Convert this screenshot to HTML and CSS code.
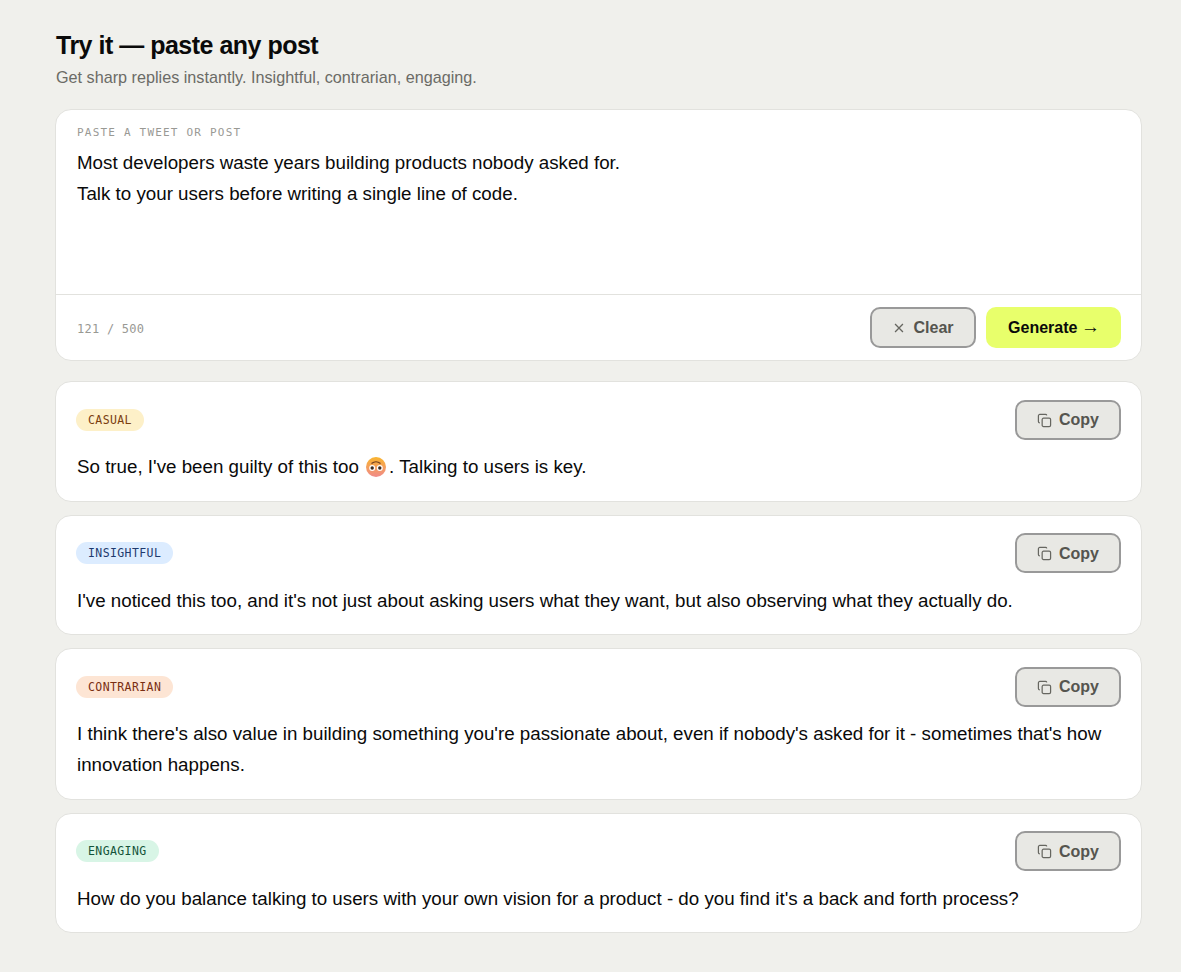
FILE: index.html
```
<!DOCTYPE html>
<html lang="en">
<head>
<meta charset="utf-8">
<title>Try it</title>
<link rel="stylesheet" href="styles.css">
</head>
<body>
<main class="page">
  <header class="intro">
    <h1>Try it — paste any post</h1>
    <p>Get sharp replies instantly. Insightful, contrarian, engaging.</p>
  </header>
  <section class="card composer">
    <div class="composer-body">
      <div class="label">PASTE A TWEET OR POST</div>
      <div class="post">Most developers waste years building products nobody asked for.<br>Talk to your users before writing a single line of code.</div>
    </div>
    <div class="composer-foot">
      <span class="count">121 / 500</span>
      <div class="actions">
        <button class="btn btn-ghost btn-clear"><svg class="ico ico-x" viewBox="0 0 16 16"><path d="M3.5 3.5l9 9M12.5 3.5l-9 9"/></svg>Clear</button>
        <button class="btn btn-go">Generate <span class="arrow">→</span></button>
      </div>
    </div>
  </section>
  <div class="replies">
    <article class="card reply">
      <div class="reply-top"><span class="tag tag-casual">CASUAL</span>
        <button class="btn btn-ghost btn-copy"><svg class="ico" viewBox="0 0 16 16"><rect x="5.5" y="5.5" width="9" height="9" rx="1.5"/><path d="M10.5 2.5A1.5 1.5 0 0 0 9 1.500H3A1.5 1.5 0 0 0 1.500 3v6A1.5 1.5 0 0 0 3 10.500"/></svg>Copy</button></div>
      <p>So true, I've been guilty of this too <svg class="emoji" viewBox="0 0 20 20"><defs><linearGradient id="face" x1="0" y1="0" x2="0" y2="1"><stop offset="0" stop-color="#f9b52e"/><stop offset="1" stop-color="#f08a8a"/></linearGradient></defs><circle cx="10" cy="10" r="10" fill="url(#face)"/><path d="M5.500 6.500Q10 3 14.500 6.500" fill="none" stroke="#6b3a1e" stroke-width="1.200"/><circle cx="6.200" cy="11" r="3" fill="#fff"/><circle cx="13.800" cy="11" r="3" fill="#fff"/><circle cx="6.200" cy="11" r="1.700" fill="#3a2a20"/><circle cx="13.800" cy="11" r="1.700" fill="#3a2a20"/></svg>. Talking to users is key.</p>
    </article>
    <article class="card reply">
      <div class="reply-top"><span class="tag tag-insightful">INSIGHTFUL</span>
        <button class="btn btn-ghost btn-copy"><svg class="ico" viewBox="0 0 16 16"><rect x="5.5" y="5.5" width="9" height="9" rx="1.5"/><path d="M10.5 2.5A1.5 1.5 0 0 0 9 1.500H3A1.5 1.5 0 0 0 1.500 3v6A1.5 1.5 0 0 0 3 10.500"/></svg>Copy</button></div>
      <p>I've noticed this too, and it's not just about asking users what they want, but also observing what they actually do.</p>
    </article>
    <article class="card reply">
      <div class="reply-top"><span class="tag tag-contrarian">CONTRARIAN</span>
        <button class="btn btn-ghost btn-copy"><svg class="ico" viewBox="0 0 16 16"><rect x="5.5" y="5.5" width="9" height="9" rx="1.5"/><path d="M10.5 2.5A1.5 1.5 0 0 0 9 1.500H3A1.5 1.5 0 0 0 1.500 3v6A1.5 1.5 0 0 0 3 10.500"/></svg>Copy</button></div>
      <p>I think there's also value in building something you're passionate about, even if nobody's asked for it - sometimes that's how innovation happens.</p>
    </article>
    <article class="card reply">
      <div class="reply-top"><span class="tag tag-engaging">ENGAGING</span>
        <button class="btn btn-ghost btn-copy"><svg class="ico" viewBox="0 0 16 16"><rect x="5.5" y="5.5" width="9" height="9" rx="1.5"/><path d="M10.5 2.5A1.5 1.5 0 0 0 9 1.500H3A1.5 1.5 0 0 0 1.500 3v6A1.5 1.5 0 0 0 3 10.500"/></svg>Copy</button></div>
      <p>How do you balance talking to users with your own vision for a product - do you find it's a back and forth process?</p>
    </article>
  </div>
</main>
</body>
</html>
```
FILE: styles.css
```
* { box-sizing: border-box; }
html, body { margin: 0; padding: 0; }
body {
  background: #f0f0ec;
  color: #0a0a0a;
  font-family: "Liberation Sans", Arial, sans-serif;
}
.page { width: 1087px; margin-left: 55px; padding-top: 29px; padding-bottom: 38px; }
.intro { padding-left: 1px; margin-bottom: 22px; }
.intro h1 { margin: 0; font-size: 25px; line-height: 32px; font-weight: 700; letter-spacing: -0.5px; }
.intro p { margin: 6px 0 0; font-size: 16.2px; line-height: 20px; color: #6b6b66; }
.card { background: #fff; border: 1px solid #e2e2de; border-radius: 16px; }
.composer { margin-bottom: 20px; }
.composer-body { height: 185px; padding: 16px 20px 0 21px; border-bottom: 1px solid #e2e2de; }
.label { font-family: "DejaVu Sans Mono", monospace; font-size: 11px; line-height: 14px; letter-spacing: 1.2px; color: #999994; }
.post { margin-top: 7px; font-size: 18.75px; line-height: 31px; }
.composer-foot { display: flex; justify-content: space-between; align-items: center; padding: 12px 20px 12px 21px; }
.count { margin-top: 2px; font-family: "DejaVu Sans Mono", monospace; font-size: 12px; letter-spacing: 0.25px; color: #999994; }
.actions { display: flex; gap: 10px; }
.btn { display: inline-flex; align-items: center; justify-content: center; gap: 7px; font-family: inherit; font-size: 16px; font-weight: 700; border-radius: 10px; height: 41px; padding: 0; cursor: pointer; }
.btn-ghost { background: #e8e8e4; border: 2px solid #999; color: #55554f; }
.btn-clear { width: 106px; }
.btn-copy { width: 106px; height: 40.1px; padding-top: 1px; }
.btn-go { width: 135px; gap: 0; padding-left: 1px; border: 0; background: #e8ff6b; color: #0a0a0a; white-space: pre; }
.arrow { margin-left: -1px; font-size: 19px; line-height: 1; position: relative; top: -1.5px; }
.ico { width: 15px; height: 15px; fill: none; stroke: #666660; stroke-width: 1.3; }
.ico-x { width: 14px; height: 14px; stroke-width: 1.5; }
.replies { display: flex; flex-direction: column; gap: 13px; }
.reply { padding: 17.6px 20px 18px; }
.reply-top { display: flex; justify-content: space-between; align-items: center; }
.reply p { margin: 12.4px 0 0; padding-left: 1px; font-size: 18.75px; line-height: 30.6px; }
.emoji { width: 20px; height: 20px; margin: 0 3px 0 2px; vertical-align: -4px; }
.tag { font-family: "DejaVu Sans Mono", monospace; font-size: 11.5px; line-height: 14px; padding: 4px 12px; border-radius: 11px; letter-spacing: 0.4px; }
.tag-casual { background: #fdf0c8; color: #7a3e10; }
.tag-insightful { background: #dcecff; color: #1e3a6e; }
.tag-contrarian { background: #fde5d4; color: #7a2e12; }
.tag-engaging { background: #d8f5e6; color: #14533a; }
```
